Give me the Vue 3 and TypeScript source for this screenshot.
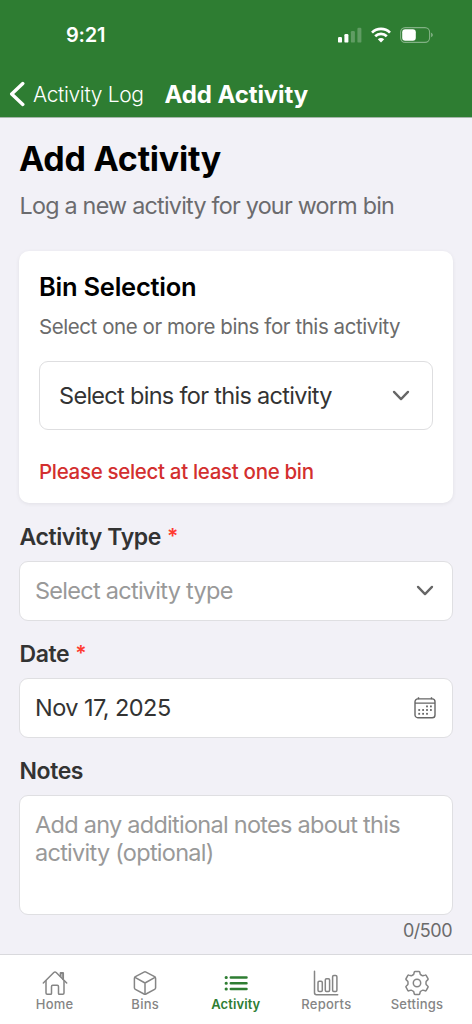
<script setup lang="ts">
import { ref } from 'vue'

interface Tab {
  id: string
  label: string
}

const tabs: Tab[] = [
  { id: 'home', label: 'Home' },
  { id: 'bins', label: 'Bins' },
  { id: 'activity', label: 'Activity' },
  { id: 'reports', label: 'Reports' },
  { id: 'settings', label: 'Settings' },
]
const activeTab = ref('activity')
const date = 'Nov 17, 2025'
const maxNotes = 500
const notes = ref('')
</script>

<template>
  <div class="screen">
    <header class="header">
      <div class="status">
        <span class="time">9:21</span>
        <div class="indicators">
          <svg class="signal" width="24" height="16" viewBox="0 0 24 16" fill="#fff">
            <rect x="0" y="10" width="4" height="5.6" rx="1.2" />
            <rect x="6.4" y="7" width="4" height="8.6" rx="1.2" />
            <rect x="12.9" y="4" width="4" height="11.6" rx="1.2" opacity=".24" />
            <rect x="19.4" y=".8" width="4" height="14.8" rx="1.2" opacity=".24" />
          </svg>
          <svg class="wifi" width="20" height="16" viewBox="0 0 20 16" fill="none" stroke="#fff" stroke-width="2.7">
            <path d="M1 5.6C6 .7 14 .7 19 5.6" />
            <path d="M4.2 9.2C7.4 6.1 12.6 6.1 15.8 9.2" />
            <path d="M10 15.4 6.8 12.2C8.6 10.6 11.4 10.6 13.2 12.2Z" fill="#fff" stroke="none" />
          </svg>
          <svg class="battery" width="33" height="16" viewBox="0 0 33 16">
            <rect x=".6" y=".6" width="29" height="14.8" rx="4.6" fill="none" stroke="#fff" stroke-opacity=".4" stroke-width="1.1" />
            <rect x="2.2" y="2.3" width="13.6" height="11.4" rx="3" fill="#fff" />
            <path d="M31.2 5.8c2 .7 2 3.7 0 4.4z" fill="#fff" opacity=".45" />
          </svg>
        </div>
      </div>
      <nav class="nav">
        <svg class="back" width="16" height="26" viewBox="0 0 16 26" fill="none" stroke="#fff" stroke-width="3.4" stroke-linecap="round" stroke-linejoin="round">
          <path d="M13.8 2.6 2.7 13l11.1 10.4" />
        </svg>
        <span class="back-label">Activity Log</span>
        <span class="nav-title">Add Activity</span>
      </nav>
    </header>

    <main class="content">
      <h1 class="title">Add Activity</h1>
      <p class="subtitle">Log a new activity for your worm bin</p>

      <section class="card">
        <h2 class="card-title">Bin Selection</h2>
        <p class="card-text">Select one or more bins for this activity</p>
        <div class="bin-select">
          <span class="bin-value">Select bins for this activity</span>
          <svg class="chevron" width="18" height="12" viewBox="0 0 18 12"><path d="M2 1.9 9 9.1l7-7.2" /></svg>
        </div>
        <p class="error">Please select at least one bin</p>
      </section>

      <div class="field">
        <div class="label"><span>Activity Type</span><span class="star">*</span></div>
        <div class="input">
          <span class="placeholder">Select activity type</span>
          <svg class="chevron" width="18" height="12" viewBox="0 0 18 12"><path d="M2 1.9 9 9.1l7-7.2" /></svg>
        </div>
      </div>

      <div class="field">
        <div class="label"><span>Date</span><span class="star">*</span></div>
        <div class="input">
          <span class="value">{{ date }}</span>
          <svg class="calendar" width="22" height="22" viewBox="0 0 22 22" fill="none" stroke="#666" stroke-width="1.4">
            <rect x="1" y="1.9" width="20" height="18.8" rx="2.8" />
            <path d="M1 6.1h20M4.5 .2v2M17.5 .2v2" />
            <g fill="#666" stroke="none">
              <rect x="12.1" y="8.5" width="1.8" height="1.8" /><rect x="16" y="8.5" width="1.8" height="1.8" />
              <rect x="4.3" y="12.1" width="1.8" height="1.8" /><rect x="8.2" y="12.1" width="1.8" height="1.8" /><rect x="12.1" y="12.1" width="1.8" height="1.8" /><rect x="16" y="12.1" width="1.8" height="1.8" />
              <rect x="4.3" y="15.9" width="1.8" height="1.8" /><rect x="8.2" y="15.9" width="1.8" height="1.8" /><rect x="12.1" y="15.9" width="1.8" height="1.8" />
            </g>
          </svg>
        </div>
      </div>

      <div class="field">
        <div class="label"><span>Notes</span></div>
        <div class="input area">
          <p class="placeholder p-notes">Add any additional notes about this<br />activity (optional)</p>
        </div>
        <div class="counter">{{ notes.length }}/{{ maxNotes }}</div>
      </div>
    </main>

    <footer class="tabbar">
      <div v-for="tab in tabs" :key="tab.id" class="tab" :class="{ active: tab.id === activeTab }">
        <svg class="tab-icon" width="26" height="26" viewBox="0 0 26 26" fill="none" stroke="currentColor" stroke-width="1.5" stroke-linejoin="round" stroke-linecap="round">
          <g v-if="tab.id === 'home'">
            <path d="M1.3 13 11.8 2.5q1.2-1.1 2.4 0L24.7 13" />
            <path d="M4 10.8V23q0 1.2 1.2 1.2h3.5q.8 0 .8-.8v-7q0-1.2 1.2-1.2h4.6q1.2 0 1.2 1.2v7q0 .8.8.8h3.5q1.2 0 1.2-1.2V10.8" />
            <path d="M18.6 6.3V3h2.5v6.2" stroke-width="1.9" />
          </g>
          <g v-else-if="tab.id === 'bins'">
            <path d="M12 2.1q1-.5 2 0l8.6 4.6q1 .6 1 1.7v9.3q0 1.1-1 1.7L14 24q-1 .5-2 0l-8.6-4.6q-1-.6-1-1.7V8.4q0-1.1 1-1.7z" />
            <path d="M3 7.3 13 13l10-5.7M13 13v11" />
          </g>
          <g v-else-if="tab.id === 'activity'" stroke-width="2.5">
            <path d="M7.8 7.5h15.7M7.8 13.3h15.7M7.8 19.1h15.7" />
            <path d="M3.1 7.5h.2M3.1 13.3h.2M3.1 19.1h.2" stroke-width="3" />
          </g>
          <g v-else-if="tab.id === 'reports'">
            <path d="M1.5 1.3v21.5q0 1.9 1.9 1.9h21.3" />
            <rect x="5" y="11.3" width="4.3" height="10.2" rx="1.2" />
            <rect x="12.3" y="8.8" width="4.3" height="12.7" rx="1.2" />
            <rect x="19.6" y="5.5" width="4.3" height="16" rx="1.2" />
          </g>
          <g v-else>
            <circle cx="13" cy="13" r="3.7" />
            <path d="M9.7 4.4 10.3 2q.2-.6.8-.6h3.8q.6 0 .8.6l.6 2.4q1.2 1 2.5 1.44l2.4-.7q.6-.2.9.3l1.9 3.3q.3.5-.1.9l-1.8 1.9q-.3 1.5 0 2.9l1.8 1.9q.4.4.1.9l-1.9 3.3q-.3.5-.9.3l-2.4-.7q-1.3.44-2.5 1.46L15.7 24q-.2.6-.8.6h-3.8q-.6 0-.8-.6l-.6-2.4q-1.2-1-2.5-1.46l-2.4.7q-.6.2-.9-.3L2 17.24q-.3-.5.1-.9l1.8-1.9q.3-1.4 0-2.9L2.1 9.64q-.4-.4-.1-.9l1.9-3.3q.3-.5.9-.3l2.4.7q1.3-.44 2.5-1.44z" />
          </g>
        </svg>
        <span class="tab-label">{{ tab.label }}</span>
      </div>
    </footer>
  </div>
</template>

<style>
html, body { margin: 0; background: #f2f1f7; }
</style>

<style scoped>
* { box-sizing: border-box; }
h1, h2, p { margin: 0; font-weight: 400; }
.screen { width: 472px; height: 1024px; display: flex; flex-direction: column; overflow: hidden; background: #f2f1f7; font-family: Inter, "Liberation Sans", sans-serif; color: #333; white-space: nowrap; }
.header { height: 118px; flex: none; background: #2e7d32; border-bottom: 1px solid #a5b6aa; color: #fff; }
.status { height: 70px; display: flex; justify-content: space-between; padding: 0 39px 0 66px; align-items: center; }
.time { font-size: 20px; font-weight: 600; line-height: 24px; letter-spacing: -0.2px; }
.indicators { display: flex; align-items: center; }
.wifi, .battery { margin-left: 9px; }
.nav { height: 48px; display: flex; align-items: center; padding-left: 9px; }
.back-label { margin-left: 8px; font-size: 21px; font-weight: 300; letter-spacing: -0.35px; width: 131.5px; }
.nav-title { font-size: 24px; font-weight: 700; letter-spacing: -0.1px; }
.content { flex: 1; min-height: 0; padding: 20px 19px 0; }
.title { color: #000; font-size: 34px; font-weight: 700; line-height: 42px; letter-spacing: -0.25px; }
.subtitle { margin-top: 11px; font-size: 23.3px; line-height: 30px; color: #6b6b6e; letter-spacing: -0.75px; padding-left: 0.5px; }
.card { margin-top: 30px; height: 252px; border-radius: 10px; background: #fff; padding: 20px 20px 0; box-shadow: 0 1px 4px rgba(0,0,0,.07); }
.card-title { color: #000; font-size: 25.5px; line-height: 31px; font-weight: 600; letter-spacing: -0.25px; }
.card-text { margin-top: 12px; font-size: 20.5px; line-height: 26px; color: #6b6b6b; letter-spacing: -0.43px; }
.bin-select { margin-top: 21px; height: 69px; border: 1px solid #dedee0; border-radius: 9px; display: flex; align-items: center; justify-content: space-between; padding: 0 22px 0 19px; }
.bin-value { font-size: 23.5px; letter-spacing: -0.7px; }
.chevron { fill: none; stroke: #666; stroke-width: 2.3; stroke-linecap: round; stroke-linejoin: round; flex: none; }
.error { margin-top: 28px; font-size: 20.5px; line-height: 28px; font-weight: 500; color: #d32f2f; letter-spacing: -0.32px; }
.field { height: 117px; }
.card + .field { margin-top: 18px; }
.label { display: flex; padding-left: 0.5px; height: 40px; font-size: 23px; line-height: 32px; font-weight: 600; letter-spacing: -0.4px; }
.star { margin-left: 6px; color: #ff3b30; font-size: 21px; line-height: 31px; }
.input { height: 59.5px; border: 1px solid #dfdfe2; border-radius: 9px; background: #fff; display: flex; align-items: center; justify-content: space-between; padding: 0 18px 0 15px; }
.placeholder { color: #999; letter-spacing: -0.73px; }
.value { letter-spacing: -0.55px; }
.placeholder, .value { font-size: 23.5px; padding-bottom: 1px; }
.calendar { margin-right: -2px; }
.area { height: 119.5px; align-items: flex-start; padding-top: 15px; }
.p-notes { line-height: 28px; }
.counter { text-align: right; font-size: 18px; line-height: 24px; margin-top: 4.5px; color: #6b6b6b; letter-spacing: -0.5px; padding-right: 1px; }
.tabbar { height: 70px; flex: none; background: #fff; border-top: 1px solid #d9d9dd; display: flex; padding: 0 9.3px; }
.tab { width: 90.6px; flex: none; display: flex; flex-direction: column; align-items: center; color: #858585; padding-top: 15px; }
.tab.active { color: #2e7d32; }
.tab-label { font-size: 13px; line-height: 16px; font-weight: 500; letter-spacing: 0.25px; }
.tab.active .tab-label { font-weight: 600; letter-spacing: 0.1px; }
</style>
